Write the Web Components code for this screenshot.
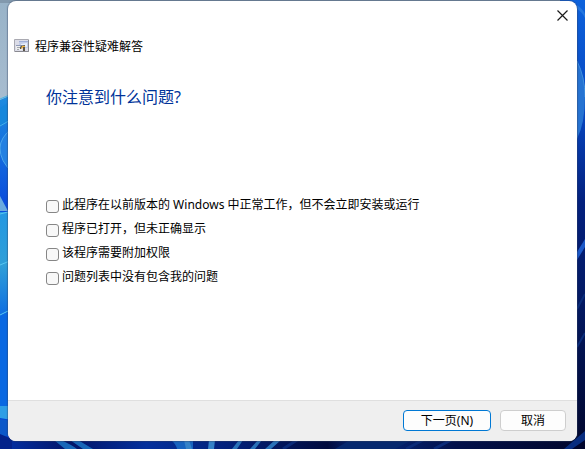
<!DOCTYPE html>
<html lang="zh-CN">
<head>
<meta charset="utf-8">
<meta name="viewport" content="width=device-width, initial-scale=1">
<title>程序兼容性疑难解答</title>
<style>
    body {
        margin: 0;
        font-family: "Noto Sans", "Noto Sans CJK SC", sans-serif;
        font-size: 12px;
        line-height: 16px;
        color: #000;
    }
</style>
</head>
<body>
<desktop-wallpaper>
    <wizard-dialog>
        <span slot="title">程序兼容性疑难解答</span>
        <problem-list></problem-list>
        <wizard-button slot="actions" primary>下一页(N)</wizard-button>
        <wizard-button slot="actions">取消</wizard-button>
    </wizard-dialog>
</desktop-wallpaper>

<script>
(function () {
    function define(name, html) {
        const template = document.createElement("template");
        template.innerHTML = html;
        customElements.define(name, class extends HTMLElement {
            constructor() {
                super();
                const root = this.attachShadow({ mode: "open" });
                root.appendChild(template.content.cloneNode(true));
            }
        });
    }

    define("desktop-wallpaper", `
        <style>
            :host {
                position: relative;
                display: flex;
                box-sizing: border-box;
                min-height: 100vh;
                padding: 1px 8px 8px;
                overflow: hidden;
                background: #021a70;
            }
            svg {
                position: absolute;
                top: 0;
                left: 0;
                width: 100%;
                height: 100%;
            }
            ::slotted(*) {
                flex: 1;
                position: relative;
            }
        </style>
        <svg viewBox="0 0 585 449" preserveAspectRatio="none" aria-hidden="true">
            <defs>
                <linearGradient id="sky" x1="0" y1="0" x2="0" y2="1">
                    <stop offset="0" stop-color="#98b3c8"/>
                    <stop offset="1" stop-color="#a9bdd0"/>
                </linearGradient>
                <linearGradient id="left" x1="0" y1="0" x2="0" y2="1">
                    <stop offset="0" stop-color="#1f8fe0"/>
                    <stop offset=".3" stop-color="#0b4fdc"/>
                    <stop offset="1" stop-color="#0344d6"/>
                </linearGradient>
                <linearGradient id="petal" x1="0" y1="0" x2="0" y2="1">
                    <stop offset="0" stop-color="#2498e2"/>
                    <stop offset=".5" stop-color="#2f9fd8"/>
                    <stop offset="1" stop-color="#0d6be2"/>
                </linearGradient>
                <linearGradient id="right" x1="0" y1="0" x2="0" y2="1">
                    <stop offset="0" stop-color="#0d62dc"/>
                    <stop offset=".25" stop-color="#0746c0"/>
                    <stop offset=".45" stop-color="#03207e"/>
                    <stop offset=".65" stop-color="#031a66"/>
                    <stop offset="1" stop-color="#01062c"/>
                </linearGradient>
                <linearGradient id="bottom">
                    <stop offset="0" stop-color="#0432a8"/>
                    <stop offset=".12" stop-color="#021568"/>
                    <stop offset=".25" stop-color="#04309c"/>
                    <stop offset=".4" stop-color="#022078"/>
                    <stop offset=".56" stop-color="#010b3e"/>
                    <stop offset=".62" stop-color="#062a80"/>
                    <stop offset=".78" stop-color="#02104a"/>
                    <stop offset="1" stop-color="#01062c"/>
                </linearGradient>
            </defs>
            <rect width="30" height="110" fill="url(#sky)"/>
            <rect width="585" height="3" fill="#8299ad"/>
            <path d="M0 100L16 93V449H0z" fill="url(#left)"/>
            <path d="M0 108L8 103V120L0 125z" fill="#1687dc"/>
            <path d="M0 99L12 94M0 126L12 119" stroke="#42b3e6" fill="none"/>
            <path d="M12 128Q0 138 0 148Q0 161 12 172z" fill="#2380e2"/>
            <path d="M12 128Q0 138 0 148Q0 161 12 172" stroke="#4ba5ea" fill="none"/>
            <path d="M0 196L8 211H0z" fill="#6aaadf"/>
            <path d="M0 212H12V309L0 318z" fill="url(#petal)"/>
            <path d="M0 214L12 211M0 265L12 260M0 315L12 309" stroke="#59c7ef" fill="none"/>
            <path d="M0 316L12 310V406H0z" fill="#0968e2"/>
            <path d="M0 406H12V420L0 418z" fill="#2e9ee6"/>
            <path d="M0 419L12 421V434L0 438z" fill="#0b58c9"/>
            <rect x="560" width="25" height="449" fill="url(#right)"/>
            <path d="M577 5Q583 9 585 14V18Q582 12 577 9z" fill="#2376df"/>
            <path d="M577 61Q585 77 585 97Q585 123 577 139z" fill="#2673d2"/>
            <path d="M577 61Q585 77 585 97" stroke="#4191df" fill="none"/>
            <path d="M577 252L585 239V247L577 260z" fill="#1b58c8"/>
            <path d="M577 309L585 294M577 347L585 333" stroke="#0a2c7a" stroke-width="2" fill="none"/>
            <rect y="438" width="585" height="11" fill="url(#bottom)"/>
            <path d="M0 434L12 439V449H0z" fill="#03228a"/>
            <path d="M54 440H61Q72 445 77 449H65zM70 440H78L93 449H83z" fill="#1767b8"/>
            <path d="M171 440Q176 444 177 449H193V440z" fill="#1763bf"/>
            <path d="M184 440H189L192 449H186zM209 440H215L214 449H208z" fill="#3482c8"/>
            <path d="M239 440H243L237 449H232zM258 440H262L255 449H250zM275 440H281L271 449H265z" fill="#2871b8"/>
            <path d="M297 440L283 449M423 440L406 449M451 440L434 449" stroke="#0a2a78" stroke-width="3" fill="none"/>
            <path d="M350 440L335 449H395L412 440z" fill="#06286e"/>
            <path d="M564 449L585 431V440L572 449z" fill="#082d80"/>
        </svg>
        <slot></slot>
    `);

    define("wizard-dialog", `
        <style>
            :host {
                display: flex;
                flex-direction: column;
                overflow: hidden;
                border-radius: 8px;
                background: #fff;
                box-shadow: 0 0 1px 1px rgba(50, 65, 95, .4);
            }
            .bar {
                display: flex;
                justify-content: flex-end;
            }
            .close {
                display: grid;
                place-items: center;
                width: 30px;
                height: 28px;
                padding: 0;
                border: 0;
                background: none;
            }
            header {
                display: flex;
                align-items: flex-end;
                gap: 5px;
                padding: 9px 6px 8px;
            }
            header svg {
                padding-bottom: 1px;
            }
            main {
                flex: 1;
                padding: 22px 38px;
            }
            footer {
                display: flex;
                justify-content: flex-end;
                gap: 9px;
                padding: 9px 11px 10px;
                border-top: 1px solid #dfdfdf;
                background: #efefef;
            }
        </style>
        <div class="bar">
            <button class="close" type="button" aria-label="关闭">
                <svg width="11" height="11" viewBox="0 0 11 11" stroke="#1a1a1a" stroke-width="1.2" aria-hidden="true">
                    <path d="M.5 .5L10.500 10.500M10.500 .5L.5 10.500"/>
                </svg>
            </button>
        </div>
        <header>
            <svg width="16" height="16" viewBox="0 0 16 16" aria-hidden="true">
                <path d="M.5 1.500H14.500V13.500H.5z" fill="#dcdde8" stroke="#a9a9b1"/>
                <path d="M1 13.500H14.500V2" fill="none" stroke="#8a8a91"/>
                <path d="M5 3H14V10H5z" fill="#c3cde8"/>
                <path d="M5 3H14V4H5z" fill="#a0afd8"/>
                <path d="M7 6L13 5V9L7 8z" fill="#e9effb"/>
                <path d="M2 7H8V12H2z" fill="#eeeeef"/>
                <path d="M2 7H8V8H2z" fill="#8f9ab8"/>
                <path d="M3 9.500H6M3 11.500H5" stroke="#a4a9ae"/>
                <path d="M6 9Q7 7 11 7V9Q8 8 7 11H6z" fill="#5b5750"/>
                <path d="M8 8H11V10H9L7 11z" fill="#eeb13a"/>
                <path d="M9 9H11V13H9z" fill="#5b554c"/>
            </svg>
            <slot name="title"></slot>
        </header>
        <main><slot></slot></main>
        <footer><slot name="actions"></slot></footer>
    `);

    define("problem-list", `
        <style>
            :host {
                display: block;
            }
            fieldset {
                margin: 0;
                padding: 0;
                border: 0;
            }
            legend {
                margin-bottom: 88px;
                padding: 0;
                font-size: 16px;
                line-height: 24px;
                color: #003399;
            }
            .options {
                display: grid;
                gap: 8px;
            }
        </style>
        <fieldset>
            <legend>你注意到什么问题?</legend>
            <div class="options">
                <check-option>此程序在以前版本的 Windows 中正常工作，但不会立即安装或运行</check-option>
                <check-option>程序已打开，但未正确显示</check-option>
                <check-option>该程序需要附加权限</check-option>
                <check-option>问题列表中没有包含我的问题</check-option>
            </div>
        </fieldset>
    `);

    define("check-option", `
        <style>
            :host {
                display: block;
            }
            label {
                display: flex;
                align-items: flex-end;
                gap: 3px;
            }
            input {
                appearance: none;
                flex: none;
                width: 13px;
                height: 13px;
                margin: 0;
                border: 1px solid #868686;
                border-radius: 3px;
                background: #f8f8f8;
            }
            input:checked {
                border-color: #0067c0;
                background: #0067c0;
            }
        </style>
        <label><input type="checkbox"><span><slot></slot></span></label>
    `);

    define("wizard-button", `
        <style>
            :host {
                display: block;
            }
            button {
                display: block;
                min-width: 66px;
                height: 21px;
                padding: 0 16px;
                border: 1px solid #cecece;
                border-radius: 4px;
                background: #fdfdfd;
                color: inherit;
                font: inherit;
                line-height: 16px;
            }
            :host([primary]) button {
                min-width: 88px;
                border-color: #0078d4;
            }
        </style>
        <button type="button"><slot></slot></button>
    `);
})();
</script>
</body>
</html>
